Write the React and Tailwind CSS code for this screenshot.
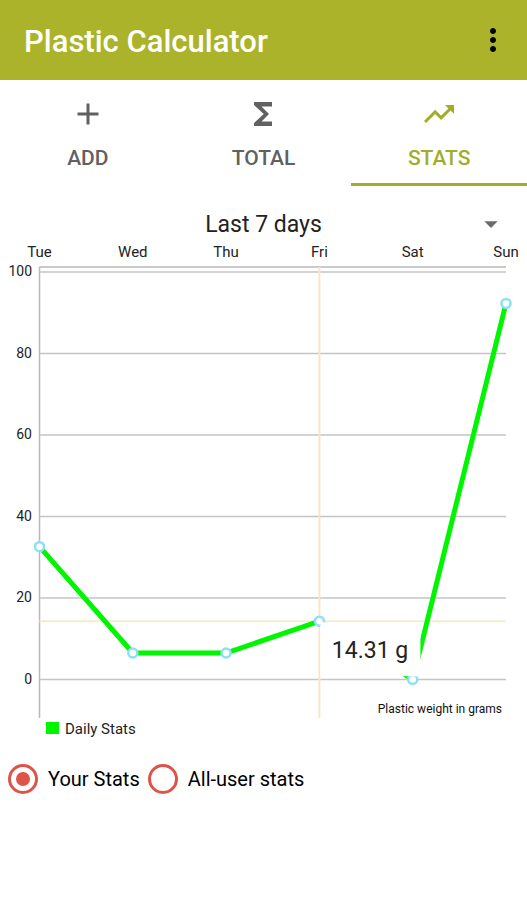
import React, { useState } from 'react';
import { MdAdd, MdArrowDropDown, MdFunctions, MdMoreVert, MdTrendingUp } from 'react-icons/md';

const tabs = [
    { id: 'add', label: 'ADD', icon: MdAdd },
    { id: 'total', label: 'TOTAL', icon: MdFunctions },
    { id: 'stats', label: 'STATS', icon: MdTrendingUp }
];

const dailyStats = [
    { day: 'Tue', grams: 32.6 },
    { day: 'Wed', grams: 6.5 },
    { day: 'Thu', grams: 6.5 },
    { day: 'Fri', grams: 14.31 },
    { day: 'Sat', grams: 0 },
    { day: 'Sun', grams: 92.3 }
];

const sources = [
    { id: 'yours', label: 'Your Stats' },
    { id: 'all', label: 'All-user stats' }
];

const ticks = [0, 20, 40, 60, 80, 100];

const LEFT = 39.5;
const RIGHT = 506;
const TOP = 27;
const BOTTOM = 478;

const toX = (index) => LEFT + (index * (RIGHT - LEFT)) / (dailyStats.length - 1);
const toY = (grams) => 439.5 - grams * 4.075;

const StatsChart = ({ selected }) => {
    const points = dailyStats.map((d, i) => `${toX(i)},${toY(d.grams)}`).join(' ');
    const markerX = toX(selected);
    const markerY = toY(dailyStats[selected].grams);

    return (
        <svg viewBox="0 0 527 500" className="block w-full" role="img" aria-label="Daily Stats">
            {/* Grid */}
            <line x1={LEFT} x2={RIGHT} y1={TOP} y2={TOP} stroke="#b9b9b9" strokeWidth="1.5" />
            <line x1={LEFT} x2={LEFT} y1={TOP} y2={BOTTOM} stroke="#b9b9b9" strokeWidth="1.5" />
            {ticks.map(tick => (
                <g key={tick}>
                    <line x1={LEFT} x2={RIGHT} y1={toY(tick)} y2={toY(tick)} stroke="#c4c4c4" strokeWidth="1.5" />
                    <text x="32" y={toY(tick) + 4} textAnchor="end" fontSize="14" fill="#222">{tick}</text>
                </g>
            ))}
            {dailyStats.map((d, i) => (
                <text key={d.day} x={toX(i)} y="17" textAnchor="middle" fontSize="15" fill="#222">{d.day}</text>
            ))}

            {/* Highlight lines */}
            <line x1={markerX} x2={markerX} y1={TOP} y2={BOTTOM} stroke="#fce4c8" strokeWidth="2" />
            <line x1={LEFT} x2={RIGHT} y1={markerY} y2={markerY} stroke="#f3ecce" strokeWidth="2" />

            {/* Data */}
            <polyline points={points} fill="none" stroke="#00f500" strokeWidth="5" />
            {dailyStats.map((d, i) => (
                <circle key={d.day} cx={toX(i)} cy={toY(d.grams)} r="4.5" fill="#fff" stroke="#8cdff5" strokeWidth="2.5" />
            ))}

            {/* Marker */}
            <rect x={markerX + 1} y={markerY + 1} width="100" height="54" fill="#fff" />
            <text x="370" y="418" textAnchor="middle" fontSize="23" fill="#222">
                {dailyStats[selected].grams} g
            </text>

            <text x="502" y="473" textAnchor="end" fontSize="12" fill="#111">Plastic weight in grams</text>

            {/* Legend */}
            <rect x="46" y="482" width="13" height="12" fill="#00f500" />
            <text x="65" y="494" fontSize="15" fill="#222">Daily Stats</text>
        </svg>
    );
};

const App = () => {
    const [activeTab, setActiveTab] = useState('stats');
    const [range, setRange] = useState('7');
    const [source, setSource] = useState('yours');

    return (
        <div className="min-h-screen bg-white font-[Roboto,sans-serif] text-[#222]">
            {/* Header */}
            <header className="flex h-20 items-center justify-between bg-[#abb32b] pl-6 pr-4">
                <h1 className="pt-1 text-[31px] font-medium leading-9 text-white">Plastic Calculator</h1>
                <button type="button" aria-label="More options" className="text-black">
                    <MdMoreVert className="size-9" />
                </button>
            </header>

            {/* Tabs */}
            <nav className="grid grid-cols-3">
                {tabs.map(({ id, label, icon: Icon }) => (
                    <button
                        key={id}
                        type="button"
                        onClick={() => setActiveTab(id)}
                        className={`flex flex-col items-center gap-3 border-b-3 pt-4 pb-[11px] text-[21px] font-medium ${
                            activeTab === id ? 'border-[#a0ad2b] text-[#a0ad2b]' : 'border-transparent text-[#616161]'
                        }`}
                    >
                        <Icon className="size-9" />
                        <span className="leading-7">{label}</span>
                    </button>
                ))}
            </nav>

            {/* Range */}
            <div className="grid items-center pt-[22px]">
                <select
                    aria-label="Period"
                    value={range}
                    onChange={(e) => setRange(e.target.value)}
                    className="col-start-1 row-start-1 h-8 w-full appearance-none bg-transparent px-12 text-center text-[23px]"
                >
                    <option value="7">Last 7 days</option>
                    <option value="30">Last 30 days</option>
                </select>
                <MdArrowDropDown className="pointer-events-none col-start-1 row-start-1 mr-5 size-8 justify-self-end text-[#6b6b6b]" />
            </div>

            <StatsChart selected={3} />

            {/* Source */}
            <div className="flex items-center gap-2 px-2 pt-6">
                {sources.map(({ id, label }) => (
                    <label key={id} className="flex items-center gap-2.5 text-xl text-black">
                        <input
                            type="radio"
                            name="source"
                            checked={source === id}
                            onChange={() => setSource(id)}
                            className="size-[30px] appearance-none rounded-full border-3 border-[#dd5548] bg-clip-content p-[5px] checked:bg-[#dd5548]"
                        />
                        {label}
                    </label>
                ))}
            </div>
        </div>
    );
};

export default App;
